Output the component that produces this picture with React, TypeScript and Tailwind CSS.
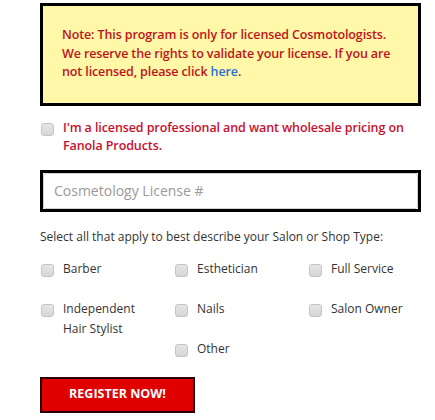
import React from 'react';

const Box: React.FC = () => (
  <span className="mt-[1px] block h-[13px] w-[13px] flex-shrink-0 rounded-[3px] border border-[#c4c4c4] bg-gradient-to-b from-[#e6e6e6] to-[#d6d6d6]" />
);

const Option: React.FC<{ label: React.ReactNode }> = ({ label }) => (
  <label className="flex items-start gap-[9px] pl-[1px] text-[12px] leading-[20px] text-[#333]">
    <span className="pt-[4px]">
      <Box />
    </span>
    <span>{label}</span>
  </label>
);

export default function App() {
  return (
    <div className="min-h-screen bg-white pl-[40px] pt-[3px]" style={{ fontFamily: '"Open Sans", Arial, sans-serif' }}>
      <div className="w-[381px]">
        <div className="border-[3px] border-black bg-[#fef8a8] pl-[19px] pr-[15px] pt-[20px] pb-[21px] text-[12.5px] font-semibold leading-[18.5px] tracking-[-0.12px] text-[#c0131b]">
          Note: This program is only for licensed Cosmotologists. We reserve the rights to validate your license. If you are not licensed, please click <a className="text-[#2b6fd8]">here</a>.
        </div>

        <label className="mt-[13px] flex items-start gap-[9px] pl-[1px] text-[12.5px] font-semibold leading-[18.5px] tracking-[-0.1px] text-[#c8102e]">
          <span className="pt-[3px]">
            <Box />
          </span>
          <span>I'm a licensed professional and want wholesale pricing on Fanola Products.</span>
        </label>

        <div className="mt-[14px] border-[3px] border-black">
          <input
            placeholder="Cosmetology License #"
            className="block h-[36px] w-full rounded-[3px] border border-[#d0d0d0] bg-white px-[10px] text-[14px] text-[#333] placeholder:text-[#9a9a9a] outline-none"
          />
        </div>

        <p className="mt-[16px] text-[12px] leading-[18px] text-[#333]">
          Select all that apply to best describe your Salon or Shop Type:
        </p>

        <div className="mt-[13px] grid grid-cols-[134px_134px_1fr] gap-y-[20px]">
          <Option label="Barber" />
          <Option label="Esthetician" />
          <Option label="Full Service" />
          <Option label={<>Independent<br />Hair Stylist</>} />
          <Option label="Nails" />
          <Option label="Salon Owner" />
          <div className="-mt-[20px]" />
          <div className="-mt-[20px]">
            <Option label="Other" />
          </div>
        </div>

        <button className="mt-[18px] h-[36px] w-[155px] border-2 border-[#2a0000] bg-[#e00000] text-[12.5px] font-bold uppercase text-white">
          Register Now!
        </button>
      </div>
    </div>
  );
}
